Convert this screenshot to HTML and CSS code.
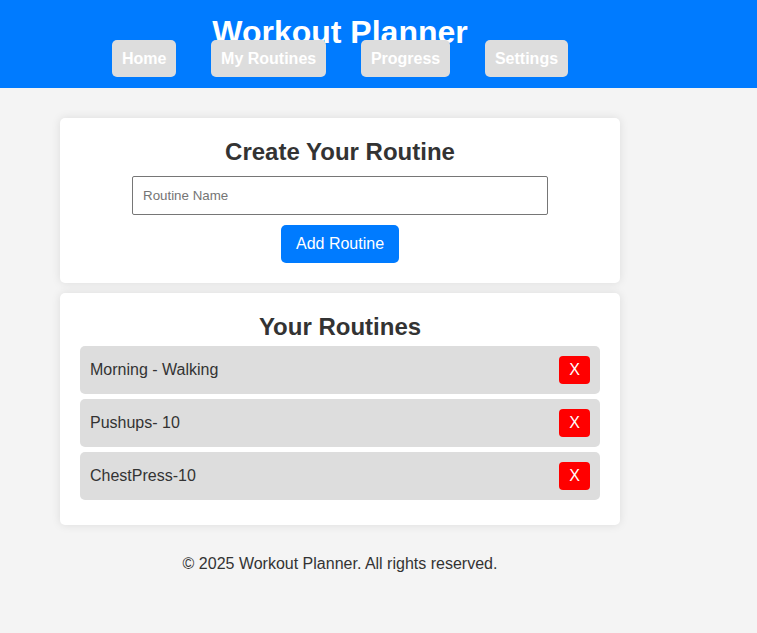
FILE: index.html
```html
<!DOCTYPE html>
<html lang="en">
<head>
<meta charset="UTF-8">
<title>Workout Planner</title>
<link rel="stylesheet" href="styles.css">
</head>
<body>
<header class="site-header">
  <div class="header-inner">
    <h1 class="site-title">Workout Planner</h1>
    <nav class="nav">
      <a class="nav-link" href="#">Home</a>
      <a class="nav-link" href="#">My Routines</a>
      <a class="nav-link" href="#">Progress</a>
      <a class="nav-link" href="#">Settings</a>
    </nav>
  </div>
</header>
<main class="page">
  <section class="card">
    <h2 class="card-title">Create Your Routine</h2>
    <form class="routine-form">
      <input class="routine-input" type="text" placeholder="Routine Name">
      <button class="add-btn" type="button">Add Routine</button>
    </form>
  </section>
  <section class="card">
    <h2 class="card-title">Your Routines</h2>
    <ul class="routine-list">
      <li class="routine-item"><span>Morning - Walking</span><button class="del-btn" type="button">X</button></li>
      <li class="routine-item"><span>Pushups- 10</span><button class="del-btn" type="button">X</button></li>
      <li class="routine-item"><span>ChestPress-10</span><button class="del-btn" type="button">X</button></li>
    </ul>
  </section>
</main>
<footer class="footer">
  <p class="footer-text">© 2025 Workout Planner. All rights reserved.</p>
</footer>
</body>
</html>
```
FILE: styles.css
```css
* { box-sizing: border-box; }
html, body { margin: 0; padding: 0; }
body {
  background: #f4f4f4;
  color: #333;
  font-family: "Liberation Sans", Arial, sans-serif;
  font-size: 16px;
}
.site-header {
  background: #007bff;
  color: #fff;
  padding: 14px 0 11px;
}
.header-inner {
  width: 680px;
  display: flex;
  flex-direction: column;
  align-items: center;
}
.site-title {
  margin: 0;
  font-size: 32px;
  font-weight: bold;
  line-height: 37px;
}
.nav {
  display: flex;
  gap: 34.7px;
  margin-top: -11px;
}
.nav-link {
  background: #ddd;
  color: #fff;
  font-weight: bold;
  text-decoration: none;
  padding: 9px 10px;
  border-radius: 5px;
  line-height: 19px;
}
.page {
  width: 680px;
  padding: 30px 60px 0;
  display: flex;
  flex-direction: column;
  gap: 10px;
}
.card {
  background: #fff;
  border-radius: 5px;
  box-shadow: 0 0 10px rgba(0, 0, 0, 0.1);
  padding: 20px;
}
.card-title {
  margin: 0 0 5px;
  text-align: center;
  font-size: 24px;
  line-height: 27.6px;
}
.routine-form {
  display: flex;
  flex-direction: column;
  align-items: center;
  padding-top: 5px;
}
.routine-input {
  width: 80%;
  height: 39px;
  padding: 10px;
  border: 1px solid #767676;
  border-radius: 2px;
  font-family: "Liberation Sans", Arial, sans-serif;
  font-size: 13.33px;
  color: #333;
}
.routine-input::placeholder { color: #757575; }
.add-btn {
  margin-top: 10px;
  background: #007bff;
  color: #fff;
  border: none;
  border-radius: 5px;
  padding: 10px 15px;
  font-family: "Liberation Sans", Arial, sans-serif;
  font-size: 16px;
  line-height: 18px;
}
.routine-list {
  list-style: none;
  margin: 0;
  padding: 1px 0 0;
}
.routine-item {
  display: flex;
  justify-content: space-between;
  align-items: center;
  background: #ddd;
  border-radius: 5px;
  padding: 10px;
  margin-bottom: 5px;
  height: 48px;
}
.del-btn {
  background: #ff0000;
  color: #fff;
  border: none;
  border-radius: 4px;
  padding: 5px 10px;
  font-family: "Liberation Sans", Arial, sans-serif;
  font-size: 16px;
  line-height: 18px;
}
.footer {
  width: 680px;
  text-align: center;
  padding: 30px 0 0;
}
.footer-text {
  margin: 0;
  line-height: 18.4px;
}
```
